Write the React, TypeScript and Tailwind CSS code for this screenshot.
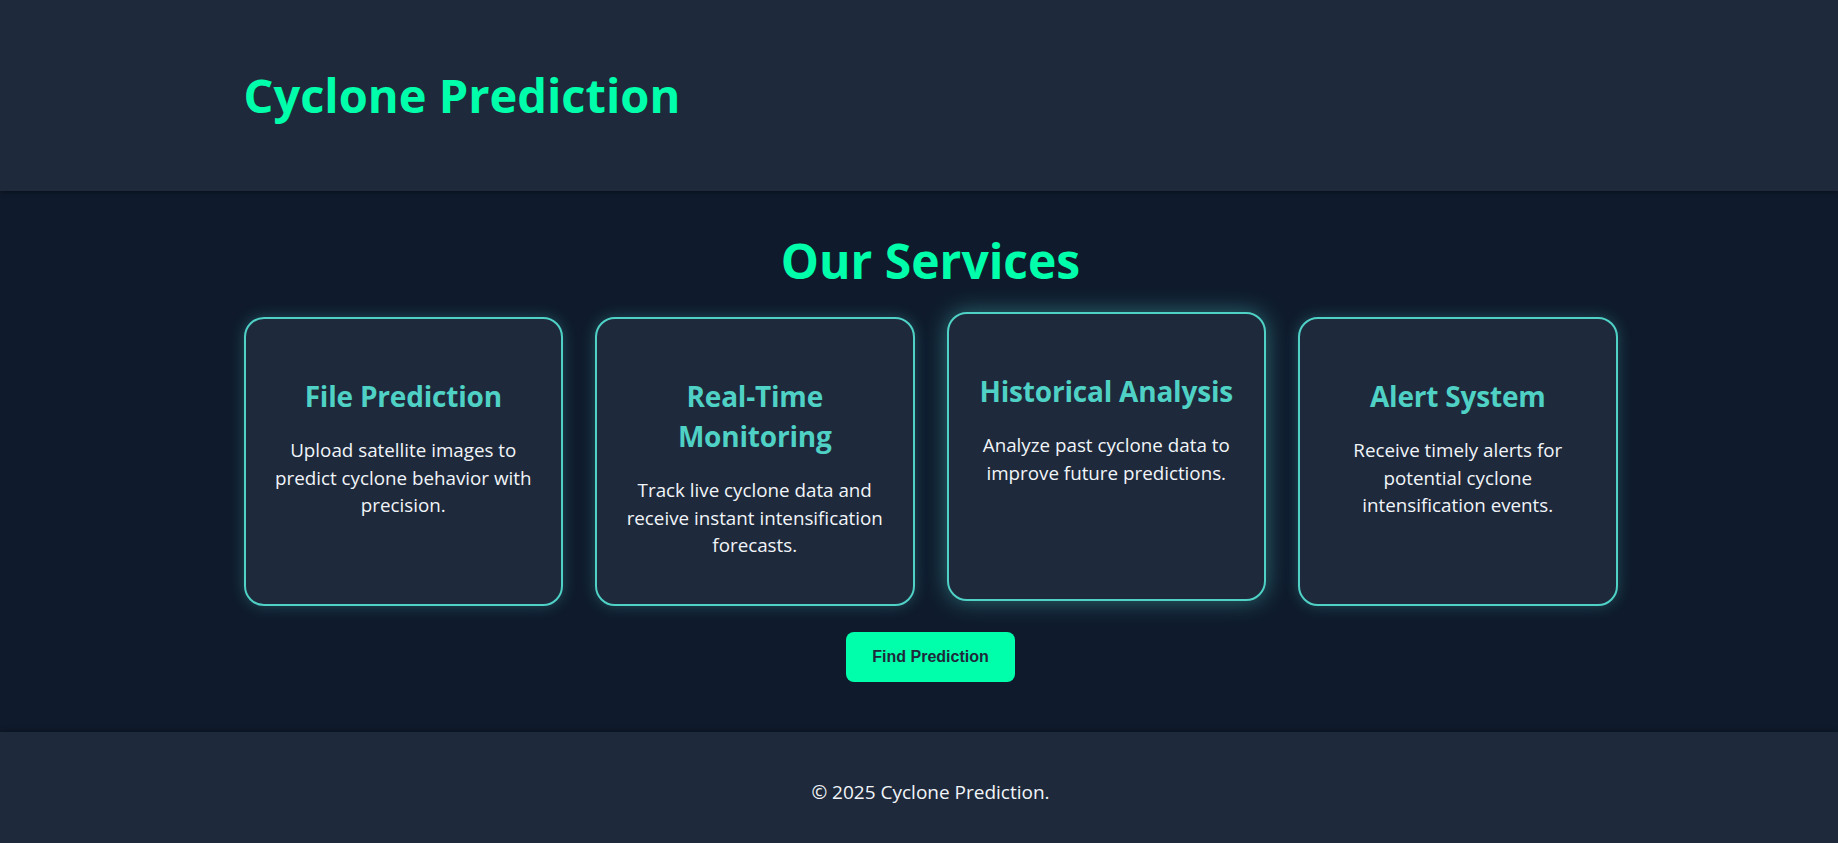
const services = [
  {
    title: "File Prediction",
    text: "Upload satellite images to predict cyclone behavior with precision.",
  },
  {
    title: "Real-Time Monitoring",
    text: "Track live cyclone data and receive instant intensification forecasts.",
  },
  {
    title: "Historical Analysis",
    text: "Analyze past cyclone data to improve future predictions.",
    active: true,
  },
  {
    title: "Alert System",
    text: "Receive timely alerts for potential cyclone intensification events.",
  },
];

function ServiceCard({ title, text, active }: { title: string; text: string; active?: boolean }) {
  return (
    <div
      className={
        active
          ? "h-[289px] -translate-y-[5px] rounded-[20px] border-2 border-[#4fd1c5] bg-[#1e293b] px-[18px] pt-[57px] text-center shadow-[0_0_22px_rgba(79,209,197,0.45)]"
          : "h-[289px] rounded-[20px] border-2 border-[#4fd1c5] bg-[#1e293b] px-[18px] pt-[57px] text-center shadow-[0_0_14px_rgba(79,209,197,0.28)]"
      }
    >
      <h3 className="text-[28px] font-bold leading-[40px] tracking-[-0.2px] text-[#4fd1c5]">{title}</h3>
      <p className="mt-[21px] px-[10px] text-[18.8px] leading-[27.5px] text-[#f1f5f9]">{text}</p>
    </div>
  );
}

export default function App() {
  return (
    <div className="min-h-screen bg-[#0f1b2d] font-['Segoe_UI','Open_Sans',sans-serif]">
      {/* Header */}
      <header className="relative z-10 bg-[#1e293b] pl-[23px] shadow-[0_2px_4px_rgba(0,0,0,0.35)]">
        <div className="mx-auto flex h-[191px] w-[1374px] items-center">
          <h1 className="text-[47px] font-bold leading-none text-[#00ffaa]">Cyclone Prediction</h1>
        </div>
      </header>

      {/* Services */}
      <section className="bg-[#0f1b2d] pl-[23px]">
        <div className="mx-auto flex h-[541px] w-[1374px] flex-col items-center pt-[40px]">
          <h2 className="text-[48px] font-bold leading-[60px] text-[#00ffaa]">Our Services</h2>
          <div className="mt-[26px] grid w-full grid-cols-4 gap-8">
            {services.map((s) => (
              <ServiceCard key={s.title} {...s} />
            ))}
          </div>
          <button className="mt-[26px] h-[50px] w-[169px] rounded-[8px] bg-[#00ffaa] font-['Liberation_Sans',Arial,sans-serif] text-[16px] font-bold text-[#1e293b]">
            Find Prediction
          </button>
        </div>
      </section>

      {/* Footer */}
      <footer className="relative bg-[#1e293b] pl-[23px] shadow-[0_-2px_4px_rgba(0,0,0,0.3)]">
        <div className="mx-auto flex h-[111px] w-[1374px] items-center justify-center pt-[10px]">
          <p className="text-[19px] text-[#f1f5f9]">© 2025 Cyclone Prediction.</p>
        </div>
      </footer>
    </div>
  );
}
